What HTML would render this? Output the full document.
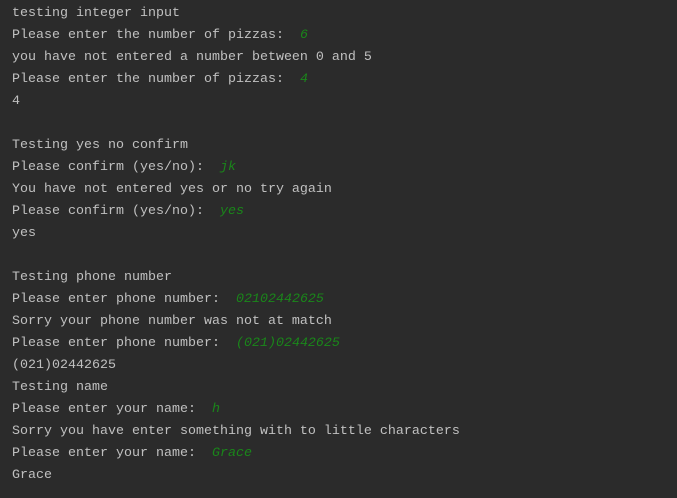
<!DOCTYPE html>
<html><head><style>
html,body{margin:0;padding:0;background:#2b2b2b;width:677px;height:498px;overflow:hidden}
pre{margin:0;padding:3px 0 0 12px;font-family:"Liberation Mono",monospace;font-size:13.33px;line-height:22px;color:#c0c0c0}
i{color:#1a861a;font-style:italic}
</style></head><body><pre>testing integer input
Please enter the number of pizzas:  <i>6</i>
you have not entered a number between 0 and 5
Please enter the number of pizzas:  <i>4</i>
4

Testing yes no confirm
Please confirm (yes/no):  <i>jk</i>
You have not entered yes or no try again
Please confirm (yes/no):  <i>yes</i>
yes

Testing phone number
Please enter phone number:  <i>02102442625</i>
Sorry your phone number was not at match
Please enter phone number:  <i>(021)02442625</i>
(021)02442625
Testing name
Please enter your name:  <i>h</i>
Sorry you have enter something with to little characters
Please enter your name:  <i>Grace</i>
Grace</pre></body></html>
